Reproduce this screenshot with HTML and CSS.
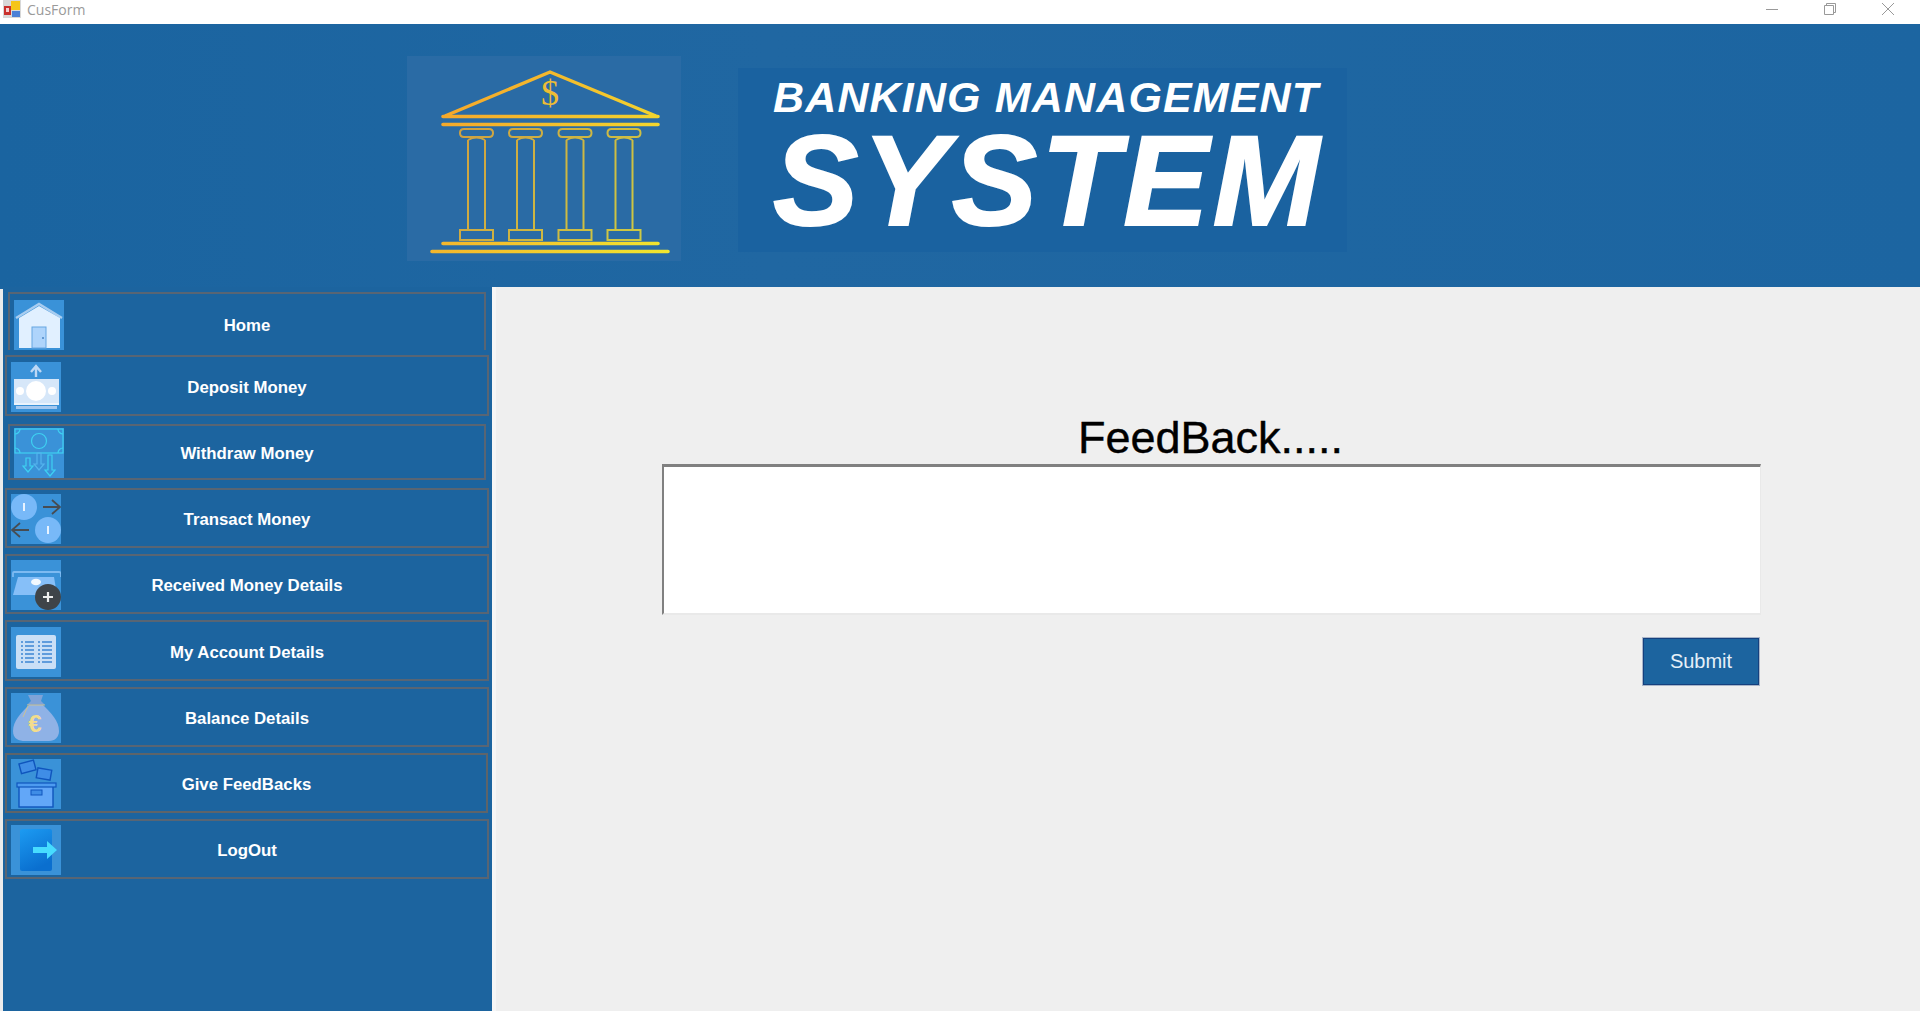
FILE: index.html
```html
<!DOCTYPE html>
<html lang="en">
<head>
    <meta charset="UTF-8">
    <meta name="viewport" content="width=device-width, initial-scale=1.0">
    <title>CusForm</title>
    <link rel="stylesheet" href="styles.css">
</head>
<body>

<div class="titlebar">
    <svg class="app-icon" viewBox="0 0 18 18">
        <rect width="18" height="18" fill="#d8d8d8"/>
        <rect x="1" y="6" width="7" height="9" fill="#c9302c"/>
        <rect x="3" y="8" width="3" height="4" fill="#f5d0d0"/>
        <rect x="8" y="1" width="9" height="9" fill="#f5c518"/>
        <rect x="9" y="11" width="8" height="6" fill="#4a7fd6"/>
    </svg>
    <span class="app-name">CusForm</span>
    <div class="window-controls">
        <svg viewBox="0 0 14 14"><path d="M1 7.5h12" stroke="#999" fill="none"/></svg>
        <svg viewBox="0 0 14 14"><path d="M1.5 3.5h9v9h-9zM3.5 3.5v-2h9v9h-2" stroke="#999" fill="none"/></svg>
        <svg viewBox="0 0 14 14"><path d="M1 1l12 12M13 1L1 13" stroke="#999" fill="none"/></svg>
    </div>
</div>

<div class="banner">
    <div class="logo-panel">
        <svg class="bank-logo" viewBox="0 0 274 205">
            <defs>
                <linearGradient id="gold" gradientUnits="userSpaceOnUse" x1="25" y1="60" x2="261" y2="195">
                    <stop offset="0" stop-color="#f5a62b"/>
                    <stop offset="1" stop-color="#f1e62f"/>
                </linearGradient>
            </defs>
            <g fill="none" stroke="url(#gold)">
                <path d="M38 60L143 16L249 60" stroke-width="3.4"/>
                <path d="M36 60.5H251M36 68.5H251M36 187.5H251M25 195.5H261" stroke-width="3.6" stroke-linecap="round"/>
                <g stroke-width="2" opacity="0.82">
                    <path d="M61 84V174M78 84V174M53 174H86V184H53ZM57 73H82Q86 73 86 77T82 81H57Q53 81 53 77T57 73ZM61 84Q69.5 79 78 84"/>
                    <path d="M110 84V174M127 84V174M102 174H135V184H102ZM106 73H131Q135 73 135 77T131 81H106Q102 81 102 77T106 73ZM110 84Q118.5 79 127 84"/>
                    <path d="M159.500 84V174M176.500 84V174M151.500 174H184.500V184H151.500ZM155.500 73H180.500Q184.500 73 184.500 77T180.500 81H155.500Q151.500 81 151.500 77T155.500 73ZM159.500 84Q168 79 176.500 84"/>
                    <path d="M208.500 84V174M225.500 84V174M200.500 174H233.500V184H200.500ZM204.500 73H229.500Q233.500 73 233.500 77T229.500 81H204.500Q200.500 81 200.500 77T204.500 73ZM208.500 84Q217 79 225.500 84"/>
                </g>
            </g>
            <text class="logo-dollar" x="143" y="49" text-anchor="middle" fill="#eebd34">$</text>
        </svg>
    </div>
    <div class="title-panel">
        <div class="title-small">BANKING MANAGEMENT</div>
        <div class="title-big">SYSTEM</div>
    </div>
</div>

<div class="workspace">
    <nav class="sidebar">
        <a class="nav-item nav-inset nav-home">
            <svg class="nav-icon" viewBox="0 0 50 50">
                <path d="M2 18L25 4L48 18" stroke="#a9cdf0" stroke-width="2.4" fill="none"/>
                <path d="M5 18L25 6L46 18V48H5Z" fill="#e1f0ff"/>
                <rect x="18" y="27" width="14" height="21" fill="#aed4fb" stroke="#66a6e2"/>
                <circle cx="29" cy="38" r="1" fill="#4a86c5"/>
            </svg>
            <span>Home</span>
        </a>
        <a class="nav-item nav-deposit">
            <svg class="nav-icon" viewBox="0 0 50 50">
                <path d="M25 15V5M20 10L25 4L30 10" stroke="#bdd8f5" stroke-width="2.4" fill="none"/>
                <rect x="3" y="17" width="45" height="24" fill="#d6e7f9"/>
                <circle cx="25" cy="29" r="10" fill="#fff"/>
                <circle cx="9" cy="29" r="4" fill="#fff"/>
                <circle cx="41" cy="29" r="4" fill="#fff"/>
                <rect x="3" y="41" width="45" height="2" fill="#eaf3fc"/>
                <rect x="5" y="44" width="41" height="3" fill="#a4c8ef"/>
            </svg>
            <span>Deposit Money</span>
        </a>
        <a class="nav-item nav-inset nav-withdraw">
            <svg class="nav-icon" viewBox="0 0 50 50">
                <g fill="none" stroke="#3ed1f2" stroke-width="1.2">
                    <rect x="1" y="1" width="48" height="24"/>
                    <circle cx="25" cy="13" r="7.5"/>
                    <path d="M1 6A5 5 0 0 0 6 1M44 1A5 5 0 0 0 49 6M1 20A5 5 0 0 1 6 25M44 25A5 5 0 0 1 49 20"/>
                    <path d="M12 30H16V38H19L14 44L9 38H12Z"/>
                    <path d="M34 27H38V42H41L36 48L31 42H34Z"/>
                </g>
                <path d="M23 25H27V36H30L25 42L20 36H23Z" fill="none" stroke="#54b4ee" stroke-width="1.2"/>
            </svg>
            <span>Withdraw Money</span>
        </a>
        <a class="nav-item nav-transact">
            <svg class="nav-icon" viewBox="0 0 50 50">
                <circle cx="13" cy="13" r="13" fill="#78b9f8"/>
                <circle cx="37" cy="36" r="13" fill="#78b9f8"/>
                <rect x="12" y="9" width="2" height="8" fill="#e8f3ff"/>
                <rect x="36" y="32" width="2" height="8" fill="#e8f3ff"/>
                <path d="M32 13H48M41 6L49 13L41 20M18 36H2M9 29L1 36L9 43" stroke="#474c52" stroke-width="1.8" fill="none"/>
            </svg>
            <span>Transact Money</span>
        </a>
        <a class="nav-item">
            <svg class="nav-icon" viewBox="0 0 50 50">
                <path d="M2 17V13Q2 12 3 12H48Q50 12 50 14V17" stroke="#7dbaf1" stroke-width="1.8" fill="none"/>
                <path d="M7 17H43L46 35H2Z" fill="#86bff8"/>
                <ellipse cx="25" cy="22" rx="5" ry="3.2" fill="#f3f9ff"/>
                <circle cx="37" cy="37" r="13" fill="#3f4449"/>
                <path d="M37 32V42M32 37H42" stroke="#eee" stroke-width="2.2"/>
            </svg>
            <span>Received Money Details</span>
        </a>
        <a class="nav-item nav-account">
            <svg class="nav-icon" viewBox="0 0 50 50">
                <rect x="5" y="8" width="40" height="34" rx="2" fill="#c9dff6"/>
                <path d="M14 15H23M14 19H23M14 23H23M14 27H23M14 31H23M14 35H23M31 15H41M31 19H41M31 23H41M31 27H41M31 31H41M31 35H41" stroke="#3d87d4" stroke-width="1.6"/>
                <path d="M10 15H12M10 19H12M10 23H12M10 27H12M10 31H12M10 35H12M27 15H29M27 19H29M27 23H29M27 27H29M27 31H29M27 35H29" stroke="#3d87d4" stroke-width="1.6"/>
            </svg>
            <span>My Account Details</span>
        </a>
        <a class="nav-item">
            <svg class="nav-icon" viewBox="0 0 50 50">
                <path d="M18 12C10 20 2 28 2 38C2 46 8 48 14 48H38C44 48 48 44 48 38C48 28 40 20 32 12Z" fill="#8fb2e6"/>
                <path d="M17 2H32L30 8L34 12H16L20 8Z" fill="#7fa3d8"/>
                <path d="M16 12H34M17 13L12 24" stroke="#d9c57e" stroke-width="0.8" fill="none"/>
                <text class="icon-euro" x="24" y="39" text-anchor="middle" fill="#f3dd8c">€</text>
            </svg>
            <span>Balance Details</span>
        </a>
        <a class="nav-item nav-give">
            <svg class="nav-icon" viewBox="0 0 50 50">
                <g fill="#3f8de6" stroke="#0f55bd" stroke-width="1.4">
                    <rect x="9" y="3" width="15" height="10" transform="rotate(-15 16 8)"/>
                    <rect x="26" y="10" width="14" height="10" transform="rotate(10 33 15)"/>
                </g>
                <rect x="8" y="27" width="34" height="21" fill="#62a7f8" stroke="#0f55bd" stroke-width="1.4"/>
                <rect x="6" y="24" width="39" height="4" fill="#4d9bf0" stroke="#0f55bd" stroke-width="1.2"/>
                <rect x="20" y="31" width="11" height="5" fill="#3f8de6" stroke="#0f55bd"/>
            </svg>
            <span>Give FeedBacks</span>
        </a>
        <a class="nav-item">
            <svg class="nav-icon" viewBox="0 0 50 50">
                <defs>
                    <linearGradient id="door" x1="0" y1="0" x2="0.4" y2="1">
                        <stop offset="0" stop-color="#1c9bf2"/>
                        <stop offset="1" stop-color="#0a6fcf"/>
                    </linearGradient>
                </defs>
                <rect x="9" y="4" width="32" height="42" rx="2" fill="url(#door)"/>
                <path d="M22 22H36V16L46 25L36 34V28H22Z" fill="#47dcff"/>
            </svg>
            <span>LogOut</span>
        </a>
    </nav>

    <main class="content">
        <form class="feedback">
            <h1>FeedBack.....</h1>
            <textarea name="feedback"></textarea>
            <button type="button">Submit</button>
        </form>
    </main>
</div>

</body>
</html>
```

FILE: styles.css
```css
* {
    box-sizing: border-box;
}
html, body {
    height: 100%;
}
body {
    margin: 0;
    display: flex;
    flex-direction: column;
    overflow: hidden;
    font-family: "Liberation Sans", Arial, sans-serif;
    background-color: #1c649f;
}

/* window title bar */
.titlebar {
    height: 24px;
    flex: none;
    display: flex;
    align-items: flex-start;
    padding-left: 3px;
    background-color: #fff;
}
.app-icon {
    width: 18px;
    height: 18px;
}
.app-name {
    margin-left: 6px;
    font-family: "Open Sans", sans-serif;
    font-size: 14px;
    line-height: 19px;
    color: #9a9a9a;
}
.window-controls {
    margin-left: auto;
    margin-right: 25px;
    padding-top: 2px;
    display: flex;
    gap: 44px;
}
.window-controls svg {
    width: 14px;
    height: 14px;
}

/* header with logo */
.banner {
    height: 263px;
    flex: none;
    display: flex;
    align-items: flex-start;
    padding: 32px 0 0 407px;
    background: linear-gradient(90deg, #1a64a0, #2067a2 40%, #1c65a1);
}
.logo-panel {
    width: 274px;
    height: 205px;
    background-color: #2a6ba5;
}
.bank-logo {
    display: block;
    width: 100%;
    height: 100%;
}
.logo-dollar {
    font-family: "Liberation Serif", serif;
    font-size: 36px;
}
.title-panel {
    width: 609px;
    height: 184px;
    margin: 12px 0 0 57px;
    padding: 4px 0 0 35px;
    background-color: #1a62a0;
    color: #fff;
    font-style: italic;
    font-weight: bold;
    white-space: nowrap;
}
.title-small {
    font-size: 43px;
    line-height: 50px;
    letter-spacing: 1.15px;
}
.title-big {
    font-size: 128px;
    line-height: 118px;
    letter-spacing: 4px;
    -webkit-text-stroke: 2px #fff;
}

/* main area */
.workspace {
    flex: 1;
    display: flex;
    min-height: 0;
    background-color: #1c649f;
}
.sidebar {
    width: 492px;
    flex: none;
    display: flex;
    flex-direction: column;
    gap: 6px;
    margin-top: 2px;
    padding: 3px 3px 0 2px;
    border-left: 3px solid #ececec;
}
.nav-item {
    height: 60px;
    display: grid;
    grid-template-columns: 50px 1fr 50px;
    align-items: center;
    padding: 2px 4px 0;
    border: 2px solid #586574;
    color: #fff;
    font-size: 16.8px;
    font-weight: bold;
    text-align: center;
    cursor: pointer;
}
.nav-item span {
    margin-top: 2px;
}
.nav-icon {
    display: block;
    width: 50px;
    height: 50px;
    background-color: #3a92d8;
}
.icon-euro {
    font-family: "Liberation Sans", sans-serif;
    font-size: 24px;
}
.nav-inset {
    margin-left: 3px;
    margin-right: 3px;
}
.nav-home {
    height: 58px;
    padding-top: 6px;
    border-bottom: none;
}
.nav-deposit {
    height: 61px;
    margin-top: -1px;
}
.nav-withdraw {
    height: 56px;
    margin-top: 2px;
}
.nav-transact {
    margin-top: 2px;
}
.nav-account {
    height: 61px;
}
.nav-give {
    margin-right: 1px;
    border-color: #5e6469;
}

.content {
    flex: 1;
    padding-left: 170px;
    background-color: #efefef;
    border-left: 4px solid #f6f6f6;
}
.feedback {
    width: 1099px;
    margin-left: -4px;
    padding-top: 122px;
    display: flex;
    flex-direction: column;
}
.feedback h1 {
    margin: 0;
    height: 55px;
    padding-right: 2px;
    font-size: 45px;
    line-height: 57px;
    font-weight: normal;
    text-align: center;
    color: #000;
    -webkit-text-stroke: 0.4px #000;
}
.feedback textarea {
    height: 151px;
    padding: 4px;
    resize: none;
    outline: none;
    background-color: #fff;
    border-style: solid;
    border-width: 3px 1px 2px 2px;
    border-color: #808080 #e9e9e9 #e9e9e9 #808080;
}
.feedback button {
    align-self: flex-end;
    width: 116px;
    height: 47px;
    margin: 23px 2px 0 0;
    background-color: #1c649f;
    border: 1px solid #15407e;
    box-shadow: 0 0 0 1px #a9b6c9;
    color: #e6f0f8;
    font-family: "Liberation Sans", Arial, sans-serif;
    font-size: 20px;
    cursor: pointer;
}
```
